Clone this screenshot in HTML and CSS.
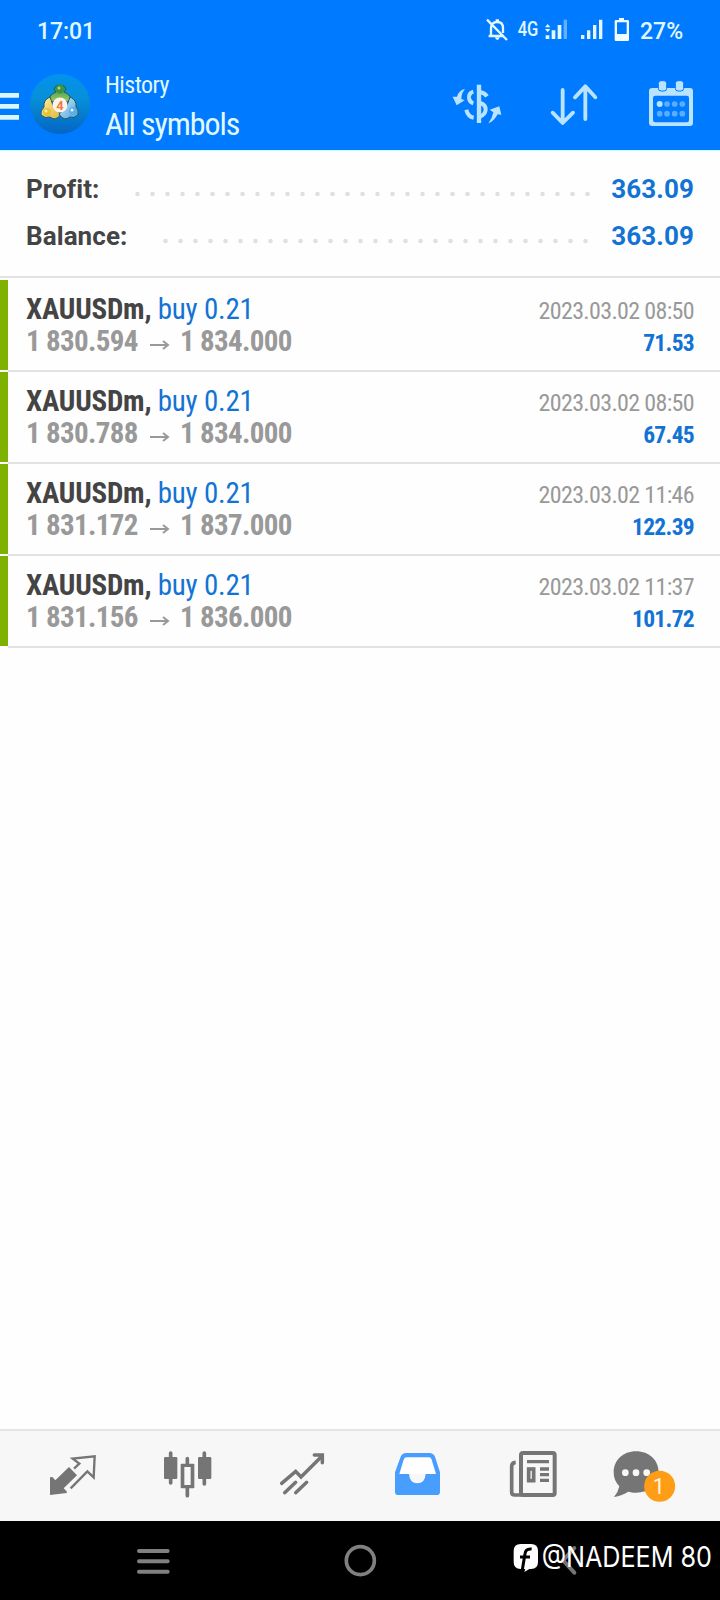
FILE: index.html
```html
<!DOCTYPE html>
<html lang="en">
<head>
<meta charset="utf-8">
<title>History</title>
<link rel="stylesheet" href="styles.css">
</head>
<body>
<div class="screen">
  <header class="header">
    <div class="status">
      <span class="clock">17:01</span>
      <svg class="status-icons" viewBox="150 0 480 180">
        <g fill="none" stroke="#e4f8ff" stroke-width="7">
          <path d="M183 108V85Q183 66 202 66Q219 66 219 84V99M176 108H222M171 59L231 120"/>
        </g>
        <path d="M197 58h10v8h-10zM195 112h14q-1 8-7 8t-7-8z" fill="#e4f8ff"/>
        <text class="net" x="263" y="109" textLength="62" lengthAdjust="spacingAndGlyphs">4G</text>
        <path d="M345 82l8-10 8 10zM345 87l8 10 8-10zM347 106h11v11h-11zM365 91h11v26h-11zM383 75h11v42h-11z" fill="#e4f8ff"/>
        <path d="M401 59h10v58h-10z" fill="#62b1ff"/>
        <path d="M453 105h10v12h-10zM471 91h10v26h-10zM489 75h10v42h-10zM507 59h10v58h-10z" fill="#e4f8ff"/>
        <path fill-rule="evenodd" d="M567 54h15v6h11q4 0 4 4v55q0 4-4 4h-35q-4 0-4-4V64q0-4 4-4h9zM561 67v35h29V67z" fill="#f2fdff"/>
      </svg>
      <span class="percent">27%</span>
    </div>
    <div class="toolbar">
      <svg class="menu" viewBox="0 180 90 267"><path d="M0 279h57v14H0zM0 312h57v14H0zM0 345h57v14H0z" fill="#daf6ff"/></svg>
      <svg class="logo" viewBox="0 0 60 60">
        <defs>
          <linearGradient id="disc" x1="0" y1="0" x2="0" y2="1"><stop offset="0" stop-color="#0392ee"/><stop offset=".4" stop-color="#0790d8"/><stop offset="1" stop-color="#0465c4"/></linearGradient>
          <linearGradient id="leaf" x1="0" y1="0" x2="0" y2="1"><stop offset="0" stop-color="#2b8c3a"/><stop offset="1" stop-color="#a9d070"/></linearGradient>
          <linearGradient id="gold" x1="0" y1="0" x2="1" y2="1"><stop offset="0" stop-color="#fff0a0"/><stop offset="1" stop-color="#d9b53f"/></linearGradient>
          <linearGradient id="sky" x1="0" y1="0" x2="1" y2="1"><stop offset="0" stop-color="#c9efff"/><stop offset="1" stop-color="#4b9fdc"/></linearGradient>
        </defs>
        <circle cx="30" cy="30" r="30" fill="url(#disc)"/>
        <g stroke="#1c5a62" stroke-width="1">
          <path d="M19 29Q18 21 26 18L24 15Q25 11 30 11Q35 11 36 15L34 18Q42 21 41 29L30 25z" fill="url(#leaf)"/>
          <path d="M20 23Q13 26 14 33Q10 37 11 41Q15 45 20 43Q26 48 31 40L24 34z" fill="url(#gold)"/>
          <path d="M40 23Q47 26 46 33Q49 36 48 41Q44 45 40 43Q34 48 29 40L36 34z" fill="url(#sky)"/>
        </g>
        <circle cx="30" cy="15" r="4.500" fill="#3d9246"/><circle cx="29" cy="14" r="1.500" fill="#a8d594"/>
        <circle cx="17" cy="38" r="4" fill="#e5c23c"/><circle cx="16" cy="37" r="1.500" fill="#fff3a8"/>
        <circle cx="43" cy="37" r="4" fill="#5daee4"/><circle cx="42" cy="36" r="1.500" fill="#e0f7ff"/>
        <circle cx="30" cy="31" r="7.500" fill="#fff3e9"/>
        <text class="logo-num" x="30" y="35.500" text-anchor="middle">4</text>
      </svg>
      <div class="titles">
        <div class="cond title-sub">History</div>
        <div class="cond title-main">All symbols</div>
      </div>
      <nav class="actions">
        <svg viewBox="-3 180 291 267">
          <g fill="none" stroke="#b9e3ff" stroke-width="12">
            <path d="M147 254V369" stroke-width="13"/>
            <path d="M130 275Q116 279 117 294Q119 307 130 310M109 329Q114 350 131 353"/>
            <path d="M150 276Q164 278 171 289M150 309Q168 314 167 330Q165 344 150 350"/>
          </g>
          <path d="M105 267Q87 270 81 290L68 290L80 316L104 301L94 297Q94 280 105 267zM175 370Q192 364 203 343L214 344L208 319L179 329L190 337Q187 354 175 370z" fill="#b9e3ff"/>
        </svg>
        <svg viewBox="288 180 291 267"><path d="M398 270V368M368 338L398 369L429 338M466 357V260M435 292L466 259L496 292" fill="none" stroke="#b9e3ff" stroke-width="11.500" stroke-linecap="round" stroke-linejoin="round"/></svg>
        <svg viewBox="579 180 291 267">
          <path fill-rule="evenodd" d="M667 264H780Q789 264 789 273V369Q789 378 780 378H667Q657 378 657 369V273Q657 264 667 264zM676 287Q669 287 669 294V360Q669 367 676 367H771Q777 367 777 360V294Q777 287 771 287z" fill="#b9e3ff"/>
          <rect x="685" y="242" width="25" height="31" rx="8" fill="#b9e3ff" stroke="#007bff" stroke-width="3"/>
          <rect x="736" y="242" width="25" height="31" rx="8" fill="#b9e3ff" stroke="#007bff" stroke-width="3"/>
          <g fill="#5cadff"><circle cx="711" cy="312" r="8.5"/><circle cx="734" cy="312" r="8.5"/><circle cx="757" cy="312" r="8.5"/><circle cx="689" cy="341" r="8.5"/><circle cx="711" cy="341" r="8.5"/><circle cx="734" cy="341" r="8.5"/><circle cx="757" cy="341" r="8.5"/></g>
          <circle cx="689" cy="312" r="9" fill="#b9e3ff"/>
        </svg>
      </nav>
    </div>
  </header>

  <section class="summary">
    <div class="sum-row"><span class="label">Profit:</span><svg class="dots profit-dots"><path d="M2.5 4H455"/></svg><span class="total">363.09</span></div>
    <div class="sum-row"><span class="label">Balance:</span><svg class="dots balance-dots"><path d="M2.5 4H425"/></svg><span class="total">363.09</span></div>
  </section>

  <main class="deals">
    <article class="deal">
      <div class="line"><span class="cond symbol"><b>XAUUSDm,</b> <span class="side">buy 0.21</span></span><time class="cond">2023.03.02 08:50</time></div>
      <div class="line"><span class="cond prices">1 830.594 <svg class="arrow" viewBox="0 0 20 12"><path d="M0 6H18M13 2L18 6L13 10"/></svg> 1 834.000</span><span class="cond gain">71.53</span></div>
    </article>
    <article class="deal">
      <div class="line"><span class="cond symbol"><b>XAUUSDm,</b> <span class="side">buy 0.21</span></span><time class="cond">2023.03.02 08:50</time></div>
      <div class="line"><span class="cond prices">1 830.788 <svg class="arrow" viewBox="0 0 20 12"><path d="M0 6H18M13 2L18 6L13 10"/></svg> 1 834.000</span><span class="cond gain">67.45</span></div>
    </article>
    <article class="deal">
      <div class="line"><span class="cond symbol"><b>XAUUSDm,</b> <span class="side">buy 0.21</span></span><time class="cond">2023.03.02 11:46</time></div>
      <div class="line"><span class="cond prices">1 831.172 <svg class="arrow" viewBox="0 0 20 12"><path d="M0 6H18M13 2L18 6L13 10"/></svg> 1 837.000</span><span class="cond gain">122.39</span></div>
    </article>
    <article class="deal">
      <div class="line"><span class="cond symbol"><b>XAUUSDm,</b> <span class="side">buy 0.21</span></span><time class="cond">2023.03.02 11:37</time></div>
      <div class="line"><span class="cond prices">1 831.156 <svg class="arrow" viewBox="0 0 20 12"><path d="M0 6H18M13 2L18 6L13 10"/></svg> 1 836.000</span><span class="cond gain">101.72</span></div>
    </article>
  </main>

  <nav class="tabs">
    <svg viewBox="42 33 345 270">
      <path d="M207 141L231 166L191 205L201 215L200 219L150 225V172L157 171L166 181z" fill="#757575"/>
      <path d="M222 146L238 131L218 116L284 109L281 172L262 154L212 205" fill="none" stroke="#757575" stroke-width="7"/>
    </svg>
    <svg viewBox="387 33 345 270">
      <g fill="#757575"><rect x="492" y="111" width="40" height="66" rx="4"/><rect x="594" y="111" width="40" height="66" rx="4"/><path fill-rule="evenodd" d="M545 131h35q3 0 3 3v68q0 3-3 3h-35q-3 0-3-3v-68q0-3 3-3zM553 141v54h19v-54z"/></g>
      <path d="M512 99V189M613 99V192M562 116V132M562 204V227" stroke="#757575" stroke-width="11" stroke-linecap="round"/>
    </svg>
    <svg viewBox="732 33 345 270"><path d="M845 190L887 154L903 171L964 110M943 105H967V128M854 218L887 187M887 218L920 187" fill="none" stroke="#757575" stroke-width="10.500" stroke-linecap="round"/></svg>
    <svg viewBox="-3 33 345 270"><path fill="#fff" d="M131 112H215L228 162H118z"/><path fill-rule="evenodd" d="M138 99H208Q220 99 225 110L240 157V215Q240 225 230 225H115Q105 225 105 215V157L122 110Q127 99 138 99zM140 112Q133 112 131 119L118 162H147Q149 190 172 190Q195 190 197 162H228L215 119Q213 112 207 112z" fill="#479eff"/></svg>
    <svg viewBox="342 33 345 270">
      <g fill="none" stroke="#757575"><rect x="483" y="99" width="101" height="126" rx="6" stroke-width="12"/><path d="M467 127Q455 128 455 139V217Q455 225 464 225H486" stroke-width="11"/><path d="M501 125H567M540 147H567M540 164H567M540 181H567" stroke-width="10"/><rect x="506" y="147" width="15" height="35" stroke-width="11"/></g>
    </svg>
    <svg viewBox="687 33 345 270">
      <path d="M828 94C868 94 896 121 896 157C896 194 868 218 828 218C819 218 811 216 805 215Q787 227 762 231Q775 216 778 199C767 188 761 175 761 157C761 121 789 94 828 94z" fill="#757575"/>
      <g fill="#f7f7f7"><circle cx="796" cy="158" r="10"/><circle cx="828" cy="158" r="10"/><circle cx="860" cy="158" r="10"/></g>
      <circle cx="899" cy="199" r="46.500" fill="#ff9d17"/>
      <text class="badge" x="896" y="223" text-anchor="middle">1</text>
    </svg>
  </nav>

  <footer class="system">
    <svg viewBox="0 303 2160 237">
      <path d="M417 393H503M417 424H503M417 455H503" stroke="#808080" stroke-width="12" stroke-linecap="round"/>
      <circle cx="1081" cy="422" r="42" fill="none" stroke="#808080" stroke-width="11"/>
      <path d="M1723 384L1689 421L1723 458" fill="none" stroke="#757575" stroke-width="12" stroke-linecap="round"/>
      <path d="M1562 372H1593Q1614 372 1614 393V426Q1614 447 1593 447H1588L1573 456L1576 447H1562Q1541 447 1541 426V393Q1541 372 1562 372z" fill="#fff"/>
      <path d="M1595 387Q1577 385 1575 401L1567 449M1560 411H1590" fill="none" stroke="#000" stroke-width="9"/>
      <text class="handle" x="1625" y="440" textLength="511" lengthAdjust="spacingAndGlyphs">@NADEEM 80</text>
    </svg>
  </footer>
</div>
</body>
</html>
```
FILE: styles.css
```css
* { box-sizing: border-box; }
body { margin: 0; background: #fff; font-family: Roboto, "Liberation Sans", sans-serif; }
svg { display: block; overflow: visible; }
.screen { width: 720px; height: 1600px; display: flex; flex-direction: column; background: #fefefe; }
.cond { font-family: "Roboto Condensed", Roboto, sans-serif; font-stretch: 75%; white-space: nowrap; }

.header { height: 151px; background: #007bff; color: #e0f8ff; flex: none; border-bottom: 1px solid #bfffff; }
.status { height: 60px; display: flex; align-items: center; font-size: 23px; font-weight: 500; padding-left: 37px; }
.clock { width: 443px; letter-spacing: -.1px; padding-top: 2px; }
.status-icons { width: 160px; height: 60px; }
.net { font: 500 60px Roboto, sans-serif; fill: #e0f8ff; }
.percent { padding-top: 2px; }
.toolbar { height: 90px; display: flex; }
.menu { width: 30px; height: 89px; }
.logo { width: 60px; height: 60px; margin-top: 14px; }
.logo-num { font: 700 13px Roboto, sans-serif; fill: #ee7b43; }
.titles { width: 339px; padding-left: 15px; padding-top: 10px; }
.title-sub { font-size: 24px; line-height: 30px; letter-spacing: -.55px; }
.title-main { font-size: 32px; line-height: 38px; margin-top: 5px; letter-spacing: -1.1px; }
.actions { display: grid; grid-template-columns: repeat(3, 97px); }
.actions svg { width: 97px; height: 89px; }

.summary { height: 127px; padding: 14px 26px 0; border-bottom: 2px solid #e2e2e2; flex: none; }
.sum-row { height: 47px; display: flex; align-items: center; font-size: 26px; font-weight: 700; color: #444; }
.label { letter-spacing: .08px; }
.dots { height: 8px; margin-left: auto; margin-top: 11px; stroke: #e0e0e0; stroke-width: 4.6; stroke-linecap: round; stroke-dasharray: 0 15; }
.profit-dots { width: 456px; }
.balance-dots { width: 428px; }
.total { width: 103px; text-align: right; color: #1273d4; letter-spacing: .1px; }

.deals { padding-top: 2px; flex: 1; }
.deal { height: 92px; border-bottom: 2px solid #e2e2e2; padding: 12px 26px 0 18px; position: relative; display: flex; flex-direction: column; margin-left: 8px; }
.deal::before { content: ""; position: absolute; left: -8px; top: 0; width: 7.5px; height: 90px; background: #7eb100; }
.line { height: 32px; display: flex; justify-content: space-between; align-items: baseline; line-height: 34px; }
.symbol, .prices { font-size: 29px; }
.symbol { color: #444; letter-spacing: -.22px; }
.side { color: #1273d4; }
.prices { color: #999; font-weight: 700; letter-spacing: -.65px; }
.arrow { display: inline-block; width: 20px; height: 12px; fill: none; stroke: #999; stroke-width: 2; margin: 0 4px 0 6px; }
time { font-size: 24px; color: #999; letter-spacing: -.66px; }
.gain { font-size: 23.5px; font-weight: 700; color: #1273d4; letter-spacing: -.7px; }

.tabs { height: 92px; flex: none; background: #f7f7f7; border-top: 2px solid #e4e4e4; padding-left: 14px; display: grid; grid-template-columns: repeat(6, 115px); }
.tabs svg { width: 115px; height: 90px; }
.badge { font: 400 64px Roboto, sans-serif; fill: #fff5df; }
.system { height: 79px; flex: none; background: #000; }
.system svg { width: 720px; height: 79px; }
.handle { font: 400 84px Inter, "Liberation Sans", sans-serif; fill: #fff; }
```
